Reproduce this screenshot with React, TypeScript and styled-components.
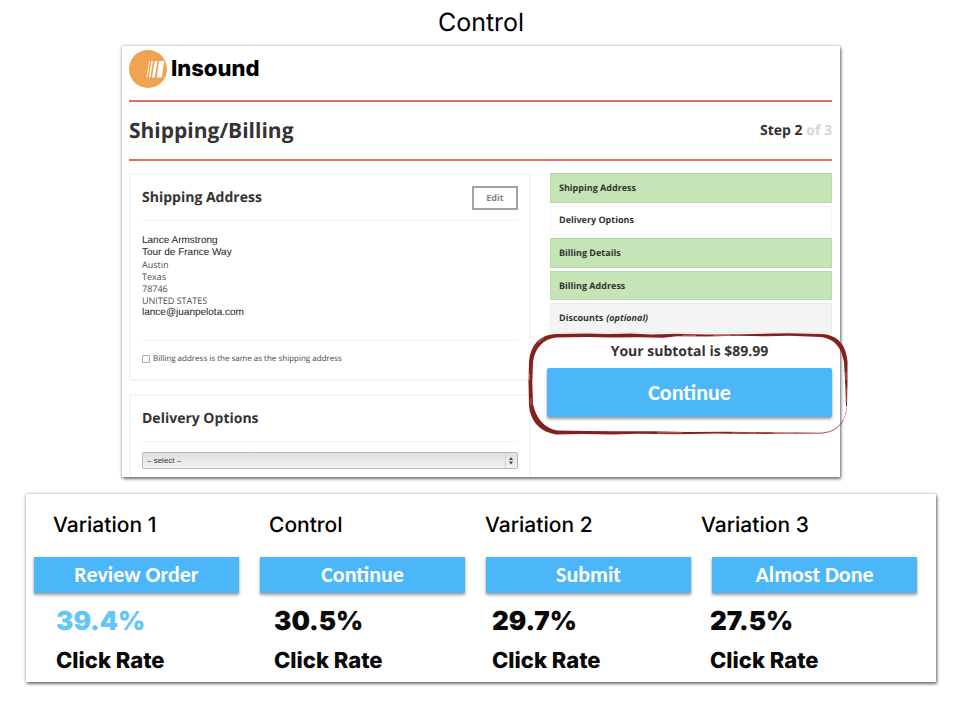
import React from "react";
import styled, { createGlobalStyle, css } from "styled-components";

const GlobalStyle = createGlobalStyle`
  *, *::before, *::after { box-sizing: border-box; }
  body {
    margin: 0;
    background: #fff;
    color: #333;
    font-family: "Open Sans", sans-serif;
    text-rendering: geometricPrecision;
  }
  h1, h2, h3, p, ul { margin: 0; padding: 0; }
`;

const Page = styled.main`
  display: flex;
  flex-direction: column;
  align-items: center;
  padding: 0 26px 20px;
`;

const PageTitle = styled.h1`
  font: 400 25px/46px Inter, sans-serif;
  color: #000;
`;

const raised = css`
  background: #fff;
  box-shadow: 0 0 3px rgba(0, 0, 0, 0.3), 1px 2px 3px rgba(0, 0, 0, 0.5);
`;

const Checkout = styled.section`
  ${raised}
  width: 100%;
  max-width: 718px;
  padding: 0 8px 0 7px;
`;

const Brand = styled.header`
  display: flex;
  align-items: center;
  gap: 4px;
  height: 54px;
  padding-bottom: 8px;
  color: #000;
  font: 800 22px/30px Inter, sans-serif;
`;

const StepBar = styled.div`
  display: flex;
  align-items: center;
  justify-content: space-between;
  height: 61px;
  border: solid #da6f66;
  border-width: 2px 0;
`;

const StepTitle = styled.h2`
  font-size: 21px;
  line-height: 28px;
`;

const StepCount = styled.p`
  font-size: 14px;
  font-weight: 700;
  line-height: 20px;
  span { color: #d5d5d5; }
`;

const Columns = styled.div`
  display: grid;
  grid-template-columns: minmax(0, 402fr) minmax(0, 282fr);
  gap: 19px;
  padding-top: 12px;
`;

const Forms = styled.div`
  display: flex;
  flex-direction: column;
  gap: 13px;
`;

const Panel = styled.section<{ $open?: boolean }>`
  padding: 0 11px;
  border: 2px solid #f5f5f5;
  ${(p) => p.$open && css`border-bottom: 0; padding-bottom: 8px;`}
`;

const PanelHeader = styled.div`
  display: flex;
  align-items: center;
  justify-content: space-between;
  height: 46px;
  border-bottom: 1px solid #f4f4f4;
`;

const PanelTitle = styled.h3`
  font-size: 14px;
  line-height: 20px;
`;

const EditButton = styled.button`
  width: 46px;
  height: 24px;
  padding: 0;
  border: 2px solid #a2a2a2;
  background: #fff;
  color: #858585;
  font: 700 9px/12px "Open Sans", sans-serif;
`;

const Address = styled.address`
  padding: 14px 0 21px;
  border-bottom: 1px solid #f4f4f4;
  font-style: normal;
`;

const AddressLine = styled.div<{ $dark?: boolean }>`
  font: 400 9px/12px "Open Sans", sans-serif;
  color: #4b4b4b;
  ${(p) => p.$dark && css`font: 400 10px/12px "Liberation Sans", sans-serif; color: #222;`}
`;

const SameAddress = styled.label`
  display: flex;
  align-items: center;
  gap: 3px;
  height: 38px;
  padding-bottom: 3px;
  font-size: 8px;
  line-height: 12px;
  color: #444;
`;

const Checkbox = styled.input`
  appearance: none;
  width: 8px;
  height: 8px;
  margin: 0;
  border: 1px solid #aaa;
  border-radius: 1px;
  background: #fafafa;
  &:checked { background: #4db8f8; }
`;

const SelectWrap = styled.div`
  position: relative;
  margin-top: 10px;
`;

const Select = styled.select`
  display: block;
  appearance: none;
  width: 100%;
  height: 17px;
  padding: 0 4px;
  border: 1px solid #b9b9b9;
  border-radius: 2px;
  background: linear-gradient(#e0e0e0, #f3f3f3);
  color: #333;
  font: 400 8px/14px "Liberation Sans", sans-serif;
`;

const SelectArrows = styled.svg`
  position: absolute;
  top: 1px;
  right: 1px;
  pointer-events: none;
`;

const StepList = styled.ul`
  display: grid;
  grid-template-rows: repeat(5, 1fr);
  gap: 3px;
  height: 160px;
  list-style: none;
`;

const tones = {
  done: css`background: #c5e5b7; border-color: #b6d9a8;`,
  current: css`background: #fff; border-color: #f4f4f4;`,
  later: css`background: #f4f4f4; border-color: #ebebeb;`,
};

const StepItem = styled.li<{ $tone: keyof typeof tones }>`
  display: flex;
  align-items: center;
  gap: 3px;
  padding: 0 8px;
  border: 1px solid;
  font-size: 9px;
  font-weight: 700;
  line-height: 12px;
  ${(p) => tones[p.$tone]}
`;

const Subtotal = styled.div`
  position: relative;
  margin-left: -3px;
  padding-top: 9px;
  text-align: center;
`;

const SubtotalText = styled.p`
  font-size: 14px;
  font-weight: 700;
  line-height: 20px;
`;

const ActionButton = styled.button<{ $large?: boolean }>`
  display: block;
  width: 100%;
  height: ${(p) => (p.$large ? 49 : 36)}px;
  margin-top: ${(p) => (p.$large ? 6 : 0)}px;
  padding: 0;
  border: 0;
  border-radius: ${(p) => (p.$large ? 2 : 0)}px;
  background: #4cb7f8;
  box-shadow: 0 2px 3px rgba(0, 0, 0, 0.4);
  color: #fff;
  font: 700 22px/24px Carlito, Lato, sans-serif;
`;

const Highlight = styled.svg`
  position: absolute;
  top: -1px;
  left: -20px;
  width: calc(100% + 37px);
  height: 104px;
  pointer-events: none;
`;

const Results = styled.section`
  ${raised}
  width: 100%;
  margin-top: 17px;
  padding: 18px 0 7px;
`;

const Row = styled.div<{ $left: number; $right: number; $gap?: number }>`
  display: grid;
  grid-template-columns: repeat(4, minmax(0, 1fr));
  gap: ${(p) => p.$gap ?? 0}px;
  padding: 0 ${(p) => p.$right}px 0 ${(p) => p.$left}px;
`;

const VariantName = styled.h3`
  height: 45px;
  color: #000;
  font: 500 21px/28px Inter, sans-serif;
`;

const Rate = styled.p<{ $winner?: boolean }>`
  padding-top: 12px;
  color: ${(p) => (p.$winner ? "#62c6f8" : "#0a0a0a")};
  font: 900 26px/34px Inter, sans-serif;
`;

const RateLabel = styled.p`
  padding-top: 8px;
  color: #0a0a0a;
  font: 800 22px/28px Inter, sans-serif;
`;

const steps: { name: string; note?: string; tone: keyof typeof tones }[] = [
  { name: "Shipping Address", tone: "done" },
  { name: "Delivery Options", tone: "current" },
  { name: "Billing Details", tone: "done" },
  { name: "Billing Address", tone: "done" },
  { name: "Discounts", note: "(optional)", tone: "later" },
];

const address = [
  { text: "Lance Armstrong", dark: true },
  { text: "Tour de France Way", dark: true },
  { text: "Austin" },
  { text: "Texas" },
  { text: "78746" },
  { text: "UNITED STATES" },
  { text: "lance@juanpelota.com", dark: true },
];

const variants = [
  { name: "Variation 1", action: "Review Order", rate: "39.4%", winner: true },
  { name: "Control", action: "Continue", rate: "30.5%" },
  { name: "Variation 2", action: "Submit", rate: "29.7%" },
  { name: "Variation 3", action: "Almost Done", rate: "27.5%" },
];

function Logo() {
  return (
    <svg width="38" height="38" viewBox="0 0 38 38" aria-hidden="true">
      <circle cx="19" cy="19" r="19" fill="#f0a452" />
      <g fill="#fff">
        <path d="M20.2 11h.8l-2.6 16.5h-.9z" />
        <path d="M22.5 11h1.4l-2.6 16.5h-1.5z" />
        <path d="M25.7 11h2.7l-2.7 16.5h-2.6z" />
        <path d="M30.2 11h5.2l-2.7 16.5h-5z" />
      </g>
    </svg>
  );
}

function BrushOutline() {
  return (
    <Highlight viewBox="0 0 322 104" preserveAspectRatio="none" aria-hidden="true">
      <path
        fill="#84211f"
        d="M28 2 L60 1.500 L82 2 L104 1.500 L125 2.500 L150 1.800 L180 2.600 L215 2.200 L245 1.600 L262 1.200 L295 2 C311 3 319 13 320.500 29 L320.500 52 L320 74 L319 74 L318.300 54 L317 30 C314 15 308 7 294 5 L262 3.800 L240 4.200 L210 3.800 L180 4.600 L150 4.200 L136 5.800 L112 5.200 L84 5.600 L60 5 L29 5.400 C16 7 8 16 6 30 L5.300 50 L6 72 C9 86 17 96 30 98.600 L60 99 L85 99.200 L125 99.200 L160 100 L200 99.800 L240 100.200 L270 100.400 L294 100.800 L294 101.600 L250 101.800 L215 102 L190 101.600 L150 102.200 L110 101.800 L85 102.600 L55 102 L29 102.400 C12 100 3 88 2 73 L1.500 50 L2 29 C4 12 13 3 28 2Z"
      />
      <g fill="none" stroke="#84211f" strokeLinecap="round">
        <path strokeWidth=".8" d="M294 101.200 C306 100 311 96 315 90" strokeDasharray="8 1 4 1" />
        <path strokeWidth=".8" opacity=".7" d="M315 90 C318 85 319.500 80 319.500 74" strokeDasharray="3 2 1 2" />
      </g>
      <g fill="none" stroke="#fff" strokeWidth=".6" opacity=".6">
        <path d="M4 66v7 M2.500 42v6 M17 5.500l-6 5 M155 3.300h14 M186 3.300h18 M130 100.800h25 M205 101h24 M246 101h20 M319 40v8 M320 56v14" />
      </g>
    </Highlight>
  );
}

export default function App() {
  return (
    <>
      <GlobalStyle />
      <Page>
        <PageTitle>Control</PageTitle>

        <Checkout>
          <Brand>
            <Logo />
            Insound
          </Brand>
          <StepBar>
            <StepTitle>Shipping/Billing</StepTitle>
            <StepCount>
              Step 2 <span>of 3</span>
            </StepCount>
          </StepBar>

          <Columns>
            <Forms>
              <Panel>
                <PanelHeader>
                  <PanelTitle>Shipping Address</PanelTitle>
                  <EditButton type="button">Edit</EditButton>
                </PanelHeader>
                <Address>
                  {address.map((line) => (
                    <AddressLine key={line.text} $dark={line.dark}>
                      {line.text}
                    </AddressLine>
                  ))}
                </Address>
                <SameAddress>
                  <Checkbox type="checkbox" />
                  Billing address is the same as the shipping address
                </SameAddress>
              </Panel>

              <Panel $open>
                <PanelHeader>
                  <PanelTitle id="delivery-title">Delivery Options</PanelTitle>
                </PanelHeader>
                <SelectWrap>
                  <Select aria-labelledby="delivery-title">
                    <option>– select –</option>
                  </Select>
                  <SelectArrows width="12" height="15" viewBox="0 0 12 15" aria-hidden="true">
                    <path d="M.5 0v15" stroke="#d4d4d4" />
                    <path d="M6 4l2 3H4zM6 11.500l2-3H4z" fill="#444" />
                  </SelectArrows>
                </SelectWrap>
              </Panel>
            </Forms>

            <aside>
              <StepList>
                {steps.map((step) => (
                  <StepItem key={step.name} $tone={step.tone}>
                    {step.name}
                    {step.note && <em>{step.note}</em>}
                  </StepItem>
                ))}
              </StepList>
              <Subtotal>
                <SubtotalText>Your subtotal is $89.99</SubtotalText>
                <ActionButton type="button" $large>
                  Continue
                </ActionButton>
                <BrushOutline />
              </Subtotal>
            </aside>
          </Columns>
        </Checkout>

        <Results>
          <Row $left={27} $right={19}>
            {variants.map((v) => (
              <VariantName key={v.name}>{v.name}</VariantName>
            ))}
          </Row>
          <Row $left={8} $right={19} $gap={21}>
            {variants.map((v) => (
              <ActionButton key={v.name} type="button">
                {v.action}
              </ActionButton>
            ))}
          </Row>
          <Row $left={30} $right={8}>
            {variants.map((v) => (
              <div key={v.name}>
                <Rate $winner={v.winner}>{v.rate}</Rate>
                <RateLabel>Click Rate</RateLabel>
              </div>
            ))}
          </Row>
        </Results>
      </Page>
    </>
  );
}
